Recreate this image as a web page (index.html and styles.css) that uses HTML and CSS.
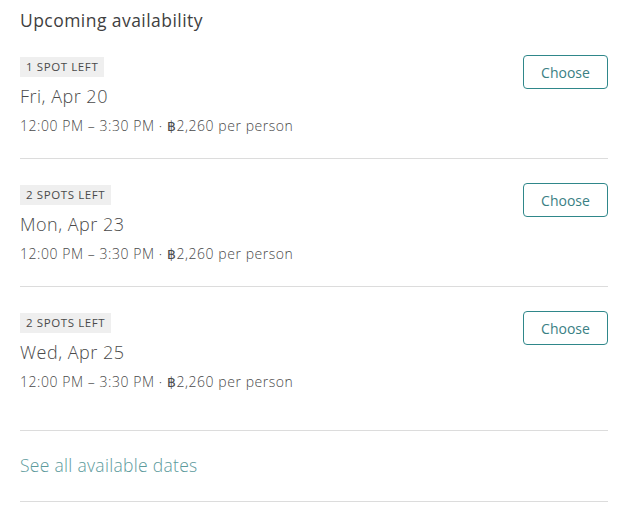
FILE: index.html
```html
<!DOCTYPE html>
<html>
<head>
<meta charset="utf-8">
<link rel="stylesheet" href="styles.css">
</head>
<body>
<div class="panel">
  <h2 class="title">Upcoming availability</h2>
  <div class="slot">
    <div class="info">
      <span class="badge">1 spot left</span>
      <div class="date">Fri, Apr 20</div>
      <div class="time">12:00 PM – 3:30 PM · ฿2,260 per person</div>
    </div>
    <button class="choose">Choose</button>
  </div>
  <div class="slot">
    <div class="info">
      <span class="badge">2 spots left</span>
      <div class="date">Mon, Apr 23</div>
      <div class="time">12:00 PM – 3:30 PM · ฿2,260 per person</div>
    </div>
    <button class="choose">Choose</button>
  </div>
  <div class="slot last">
    <div class="info">
      <span class="badge">2 spots left</span>
      <div class="date">Wed, Apr 25</div>
      <div class="time">12:00 PM – 3:30 PM · ฿2,260 per person</div>
    </div>
    <button class="choose">Choose</button>
  </div>
  <div class="more"><a href="#">See all available dates</a></div>
</div>
</body>
</html>
```

FILE: styles.css
```css
* { box-sizing: border-box; }
body {
  margin: 0;
  background: #fff;
  font-family: "Open Sans", "Noto Sans", Arial, sans-serif;
  color: #484848;
}
.panel {
  width: 608px;
  padding: 8px 0 0 20px;
}
.title {
  margin: 0;
  font-size: 17.5px;
  line-height: 24px;
  font-weight: 500;
  letter-spacing: 0.45px;
  color: #3f3f3f;
}
.slot {
  display: flex;
  justify-content: space-between;
  align-items: flex-start;
  padding: 26px 0 22px;
  border-bottom: 1px solid #dcdcdc;
}
.panel .title + .slot { padding-top: 25px; }
.slot.last { padding-bottom: 38px; }
.info { display: flex; flex-direction: column; align-items: flex-start; }
.badge {
  display: inline-block;
  height: 20px;
  line-height: 20px;
  padding: 0 6px;
  background: #efefef;
  color: #4a4a4a;
  font-size: 11.5px;
  letter-spacing: 0.6px;
  text-transform: uppercase;
}
.date {
  margin-top: 6px;
  font-size: 18px;
  line-height: 26px;
  font-weight: 300;
  letter-spacing: 0.5px;
  color: #4a4a4a;
}
.time {
  margin-top: 7px;
  font-size: 14px;
  line-height: 20px;
  font-weight: 300;
  letter-spacing: 0.55px;
  color: #4a4a4a;
}
.choose {
  margin-top: -2px;
  width: 85px;
  height: 34px;
  border: 1px solid #2f878a;
  border-radius: 4px;
  background: #fff;
  color: #3a8084;
  font-family: inherit;
  font-size: 14px;
  cursor: pointer;
}
.more {
  padding: 22px 0 23px;
  border-bottom: 1px solid #dcdcdc;
  line-height: 24px;
}
.more a {
  color: #5c9a9c;
  font-size: 17.5px;
  font-weight: 300;
  letter-spacing: 0.3px;
  text-decoration: none;
}
```
